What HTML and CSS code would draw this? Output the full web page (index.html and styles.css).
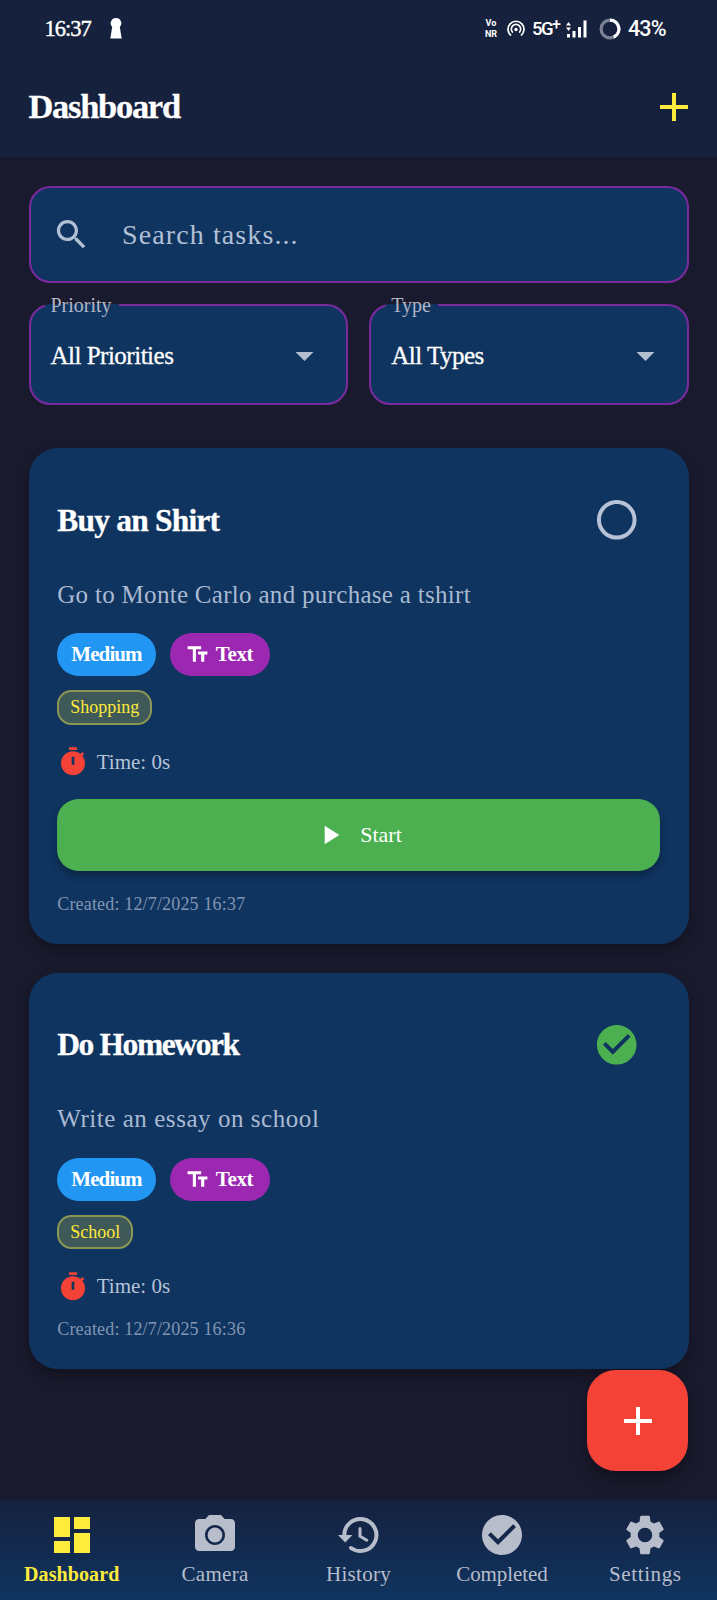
FILE: index.html
```html
<!DOCTYPE html>
<html lang="en">
<head>
<meta charset="utf-8">
<title>Dashboard</title>
<link rel="stylesheet" href="styles.css">
</head>
<body>
<svg class="defs" aria-hidden="true">
  <symbol id="plus" viewBox="0 0 24 24"><path d="M19 13h-6v6h-2v-6H5v-2h6V5h2v6h6z"/></symbol>
  <symbol id="drop" viewBox="0 0 24 24"><path d="M7 10l5 5 5-5z"/></symbol>
  <symbol id="check" viewBox="0 0 24 24"><path d="M12 2C6.48 2 2 6.48 2 12s4.48 10 10 10 10-4.48 10-10S17.52 2 12 2zm-2 15l-5-5 1.41-1.41L10 14.17l7.59-7.59L19 8l-9 9z"/></symbol>
  <symbol id="ring" viewBox="0 0 24 24"><path d="M12 2C6.48 2 2 6.48 2 12s4.48 10 10 10 10-4.48 10-10S17.52 2 12 2zm0 18c-4.42 0-8-3.58-8-8s3.58-8 8-8 8 3.580 8 8-3.580 8-8 8z"/></symbol>
  <symbol id="type" viewBox="0 0 24 24"><path d="M2.500 4v3h5v12h3V7h5V4h-13zm19 5h-9v3h3v7h3v-7h3V9z"/></symbol>
  <symbol id="timer" viewBox="0 0 24 24"><path d="M9 1h6v2H9zM19.030 7.390l1.420-1.420c-.43-.51-.9-.99-1.410-1.410l-1.420 1.420C16.070 4.740 14.120 4 12 4c-4.970 0-9 4.030-9 9s4.020 9 9 9 9-4.030 9-9c0-2.120-.74-4.070-1.970-5.610zM13 14h-2V8h2v6z"/></symbol>
</svg>
<div class="screen">
  <header class="top">
    <div class="status">
      <span class="clock">16:37</span>
      <svg class="keyhole" viewBox="0 0 12 21"><path d="M6 0a5.300 5.300 0 0 1 3.800 9L11.700 20.500H.3L2.200 9A5.300 5.300 0 0 1 6 0z"/></svg>
      <div class="vonr"><span>Vo</span><span>NR</span></div>
      <svg class="hotspot" viewBox="0 0 18 17"><g fill="none" stroke="#fff" stroke-width="1.700"><path d="M4 15.500a8 8 0 1 1 10 0"/><path d="M5.800 12.600a4.700 4.700 0 1 1 6.400 0"/></g><circle cx="9" cy="9.500" r="1.700"/></svg>
      <span class="net">5G<sup>+</sup></span>
      <svg class="signal" viewBox="0 0 21 18"><path d="M0 5.500l2.500-3.500L5 5.500zM0 7.500h5L2.500 11zM1 14h3v3.500H1zM6.500 11h3v6.500h-3zM12 7h3v10.500h-3zM17.500.5h3v17h-3z"/></svg>
      <svg class="battery" viewBox="0 0 22 22"><circle cx="11" cy="11" r="8.900" fill="none" stroke="#7b8295" stroke-width="3.200"/><path d="M11 2.100a8.900 8.900 0 0 1 3.800 16.950" fill="none" stroke="#fff" stroke-width="3.200"/></svg>
      <span class="percent">43%</span>
    </div>
    <div class="bar">
      <h1>Dashboard</h1>
      <svg class="add" viewBox="0 0 24 24"><use href="#plus"/></svg>
    </div>
  </header>

  <main>
    <div class="search">
      <svg viewBox="0 0 24 24"><path d="M15.500 14h-.79l-.28-.27C15.410 12.590 16 11.110 16 9.500 16 5.910 13.090 3 9.500 3S3 5.910 3 9.500 5.910 16 9.500 16c1.610 0 3.090-.59 4.230-1.570l.27.28v.79l5 4.990L20.490 19l-4.990-5zm-6 0C7.010 14 5 11.990 5 9.500S7.010 5 9.500 5 14 7.010 14 9.500 11.990 14 9.500 14z"/></svg>
      <span>Search tasks...</span>
    </div>
    <div class="filters">
      <fieldset class="select"><legend>Priority</legend><span>All Priorities</span><svg viewBox="0 0 24 24"><use href="#drop"/></svg></fieldset>
      <fieldset class="select"><legend>Type</legend><span>All Types</span><svg viewBox="0 0 24 24"><use href="#drop"/></svg></fieldset>
    </div>

    <article class="card">
      <div class="head"><h2>Buy an Shirt</h2><svg class="mark" viewBox="0 0 24 24"><use href="#ring"/></svg></div>
      <p class="desc">Go to Monte Carlo and purchase a tshirt</p>
      <div class="chips">
        <span class="chip medium">Medium</span>
        <span class="chip text"><svg viewBox="0 0 24 24"><use href="#type"/></svg>Text</span>
      </div>
      <div class="tags"><span class="tag">Shopping</span></div>
      <div class="time"><svg viewBox="0 0 24 24"><use href="#timer"/></svg>Time: 0s</div>
      <div class="start"><svg viewBox="0 0 24 24"><path d="M8 5v14l11-7z"/></svg>Start</div>
      <p class="created">Created: 12/7/2025 16:37</p>
    </article>

    <article class="card done">
      <div class="head"><h2>Do Homework</h2><svg class="mark" viewBox="0 0 24 24"><use href="#check"/></svg></div>
      <p class="desc">Write an essay on school</p>
      <div class="chips">
        <span class="chip medium">Medium</span>
        <span class="chip text"><svg viewBox="0 0 24 24"><use href="#type"/></svg>Text</span>
      </div>
      <div class="tags"><span class="tag">School</span></div>
      <div class="time"><svg viewBox="0 0 24 24"><use href="#timer"/></svg>Time: 0s</div>
      <p class="created">Created: 12/7/2025 16:36</p>
    </article>
  </main>

  <div class="fab"><svg viewBox="0 0 24 24"><use href="#plus"/></svg></div>

  <nav>
    <div class="item active"><svg viewBox="0 0 24 24"><path d="M3 13h8V3H3v10zm0 8h8v-6H3v6zm10 0h8V11h-8v10zm0-18v6h8V3h-8z"/></svg><span>Dashboard</span></div>
    <div class="item"><svg viewBox="0 0 24 24"><circle cx="12" cy="12" r="3.700"/><path d="M9 2L7.170 4H4c-1.100 0-2 .9-2 2v12c0 1.100.9 2 2 2h16c1.100 0 2-.9 2-2V6c0-1.100-.9-2-2-2h-3.170L15 2H9zm3 15c-2.760 0-5-2.240-5-5s2.240-5 5-5 5 2.240 5 5-2.240 5-5 5z"/></svg><span>Camera</span></div>
    <div class="item"><svg viewBox="0 0 24 24"><g fill="none" stroke="currentColor" stroke-linecap="round"><path stroke-width="2" d="M4.700 12.500A8 8 0 1 1 8 18.500"/><path stroke-width="1.500" d="M12.500 8.700v3.900l3.400 2"/></g><path d="M1.500 12h7.200l-3.600 3.800z"/></svg><span>History</span></div>
    <div class="item completed"><svg viewBox="0 0 24 24"><use href="#check"/></svg><span>Completed</span></div>
    <div class="item settings"><svg viewBox="0 0 24 24"><path d="M19.140 12.940c.04-.3.06-.61.06-.94 0-.32-.02-.64-.07-.94l2.030-1.580c.18-.14.23-.41.12-.61l-1.920-3.320c-.12-.22-.37-.29-.59-.22l-2.390.96c-.5-.38-1.030-.7-1.620-.94l-.36-2.540c-.04-.24-.24-.41-.48-.41h-3.840c-.24 0-.43.17-.47.41l-.36 2.540c-.59.24-1.130.57-1.620.94l-2.390-.96c-.22-.08-.47 0-.59.22L2.740 8.870c-.12.21-.08.47.12.61l2.030 1.580c-.05.3-.09.63-.09.94s.02.64.07.94l-2.030 1.580c-.18.14-.23.41-.12.61l1.920 3.320c.12.22.37.29.59.22l2.390-.96c.5.38 1.030.7 1.620.94l.36 2.540c.05.24.24.41.48.41h3.840c.24 0 .44-.17.47-.41l.36-2.540c.59-.24 1.130-.56 1.620-.94l2.390.96c.22.08.47 0 .59-.22l1.920-3.320c.12-.22.07-.47-.12-.61l-2.010-1.580zM12 15.600c-1.980 0-3.600-1.620-3.600-3.600s1.620-3.600 3.600-3.600 3.600 1.620 3.600 3.600-1.620 3.600-3.600 3.600z"/></svg><span>Settings</span></div>
  </nav>
</div>
</body>
</html>
```
FILE: styles.css
```css
* { box-sizing: border-box; margin: 0; padding: 0; }

body {
  background: #1a1a2e;
  color: #fff;
  font-family: "Liberation Serif", "Times New Roman", serif;
}

.defs { display: none; }
svg { display: block; flex: none; fill: currentColor; }

.screen {
  position: relative;
  display: flex;
  flex-direction: column;
  width: 717px;
  height: 1600px;
  overflow: hidden;
}

/* Status and title bars */
.top { height: 157px; background: #16213e; }

.status {
  display: flex;
  align-items: center;
  height: 57px;
  padding: 0 50px 0 44.500px;
}
.clock { width: 65.500px; font-size: 22.500px; letter-spacing: -1px; -webkit-text-stroke: .4px #fff; }
.keyhole { width: 12px; height: 21px; }
.vonr {
  display: flex;
  flex-direction: column;
  align-items: center;
  width: 16px;
  margin-left: 361px;
  padding-top: 1px;
  font: bold 9px/11px Roboto, sans-serif;
}
.hotspot { width: 18px; height: 17px; margin-left: 8px; }
.net { display: flex; width: 27px; margin-left: 7px; font: 500 18.500px/22px Roboto, sans-serif; letter-spacing: -1.600px; }
.net sup { margin: -4px 0 0 0; font-size: 16px; }
.signal { width: 21px; height: 18px; margin-left: 7px; }
.battery { width: 22px; height: 22px; margin-left: 12px; }
.percent { margin-left: 7px; font: 500 21.500px Roboto, sans-serif; letter-spacing: -.9px; white-space: nowrap; }

.bar {
  display: flex;
  align-items: center;
  justify-content: space-between;
  height: 100px;
  padding: 0 19px 0 28.500px;
}
h1 { font-size: 34.500px; line-height: 98px; letter-spacing: -1.300px; -webkit-text-stroke: .3px #fff; transform: translateY(-1px); }
.add { width: 48px; height: 48px; color: #ffeb3b; }

/* Search and filters */
main { flex: 1; padding: 29px 28.500px 0; }

.search {
  display: flex;
  align-items: center;
  gap: 31.500px;
  height: 97px;
  padding-left: 21px;
  border: 2px solid #7b2a9e;
  border-radius: 21.500px;
  background: #0f3460;
  color: #b2c0d5;
  font-size: 28px;
  letter-spacing: 1.100px;
}
.search svg { width: 39px; height: 39px; }

.filters { display: flex; gap: 21.500px; margin-top: 10px; }

.select {
  display: flex;
  flex: 1;
  align-items: center;
  justify-content: space-between;
  min-width: 0;
  height: 112px;
  padding: 0 19.500px 9px 20px;
  border: 2px solid #7b2a9e;
  border-radius: 21.500px;
  background: #0f3460;
}
.select legend {
  height: 24px;
  margin-left: -5.500px;
  padding: 0 7.500px 0 5.500px;
  color: #b2b6c4;
  font-size: 20px;
  line-height: 24px;
}
.select span { font-size: 25px; letter-spacing: -.5px; -webkit-text-stroke: .3px #fff; }
.select svg { width: 43px; height: 43px; color: #b2bfce; }

/* Task cards */
.card {
  display: flex;
  flex-direction: column;
  height: 496px;
  margin-top: 43px;
  padding: 29px 28.750px;
  border-radius: 28.750px;
  background: #0f3460;
  box-shadow: 0 7px 14px rgba(0, 0, 0, .3);
}
.card.done { height: 396px; margin-top: 28.500px; }

.head {
  display: flex;
  align-items: center;
  justify-content: space-between;
  height: 86px;
  padding-right: 19px;
}
h2 { padding-top: 1px; font-size: 31.500px; letter-spacing: -.8px; -webkit-text-stroke: .3px #fff; }
.done h2 { padding-top: 2px; letter-spacing: -1.400px; }
.mark { width: 47.500px; height: 47.500px; color: #b7c2d7; }
.done .mark { color: #4caf50; }

.desc { margin-top: 15px; color: #a9bad2; font-size: 25px; line-height: 34px; letter-spacing: .3px; }
.done .desc { letter-spacing: .550px; }

.chips { display: flex; gap: 14.500px; margin-top: 21px; }
.done .chips { margin-top: 21.500px; }
.chip {
  display: flex;
  align-items: center;
  justify-content: center;
  gap: 6px;
  height: 43px;
  border-radius: 21.500px;
  font-size: 21px;
  font-weight: bold;
  letter-spacing: -.9px;
}
.medium { width: 98.500px; background: #2196f3; }
.text { width: 99.500px; padding-right: 2px; background: #9c27b0; letter-spacing: -.4px; }
.chip svg { width: 25px; height: 25px; }

.tags { display: flex; margin-top: 14px; }
.tag {
  height: 34.500px;
  padding: 0 11px;
  border: 2px solid #8b9654;
  border-radius: 14.400px;
  background: #3f5858;
  color: #ffeb3b;
  font-size: 18px;
  line-height: 31px;
}

.time {
  display: flex;
  align-items: center;
  gap: 8px;
  height: 43px;
  margin: 16px 0 0 -.5px;
  color: #b4c3d7;
  font-size: 21px;
}
.time svg { width: 32px; height: 32px; color: #f44336; }

.start {
  display: flex;
  align-items: center;
  justify-content: center;
  gap: 14px;
  height: 72px;
  margin-top: 15.500px;
  padding-right: 1px;
  border-radius: 21.500px;
  background: #4caf50;
  box-shadow: 0 5px 9px rgba(0, 0, 0, .28);
  font-size: 22px;
}
.start svg { width: 32px; height: 32px; }

.created { margin-top: 22px; color: #8196b4; font-size: 18px; line-height: 22px; letter-spacing: .17px; }
.done .created { margin-top: 9.500px; }

/* Floats over the task list */
.fab {
  position: absolute;
  right: 29px;
  bottom: 129px;
  display: flex;
  align-items: center;
  justify-content: center;
  width: 100.600px;
  height: 100.600px;
  border-radius: 28.750px;
  background: #f44336;
  box-shadow: 0 8px 15px rgba(0, 0, 0, .35);
}
.fab svg { width: 48px; height: 48px; }

/* Bottom navigation */
nav {
  display: flex;
  height: 101px;
  padding-top: 12px;
  background: linear-gradient(#16213e, #0f3460);
}
.item {
  display: flex;
  flex: 1;
  flex-direction: column;
  align-items: center;
  color: #b7bdcb;
  font-size: 21px;
  line-height: 30px;
}
.item svg { width: 48px; height: 48px; }
.item span { letter-spacing: .3px; }
.item.active { color: #ffeb3b; font-size: 20px; font-weight: bold; }
.item.active span { letter-spacing: .1px; }
.item.completed span { letter-spacing: -.1px; }
.item.settings span { letter-spacing: .6px; }
```
